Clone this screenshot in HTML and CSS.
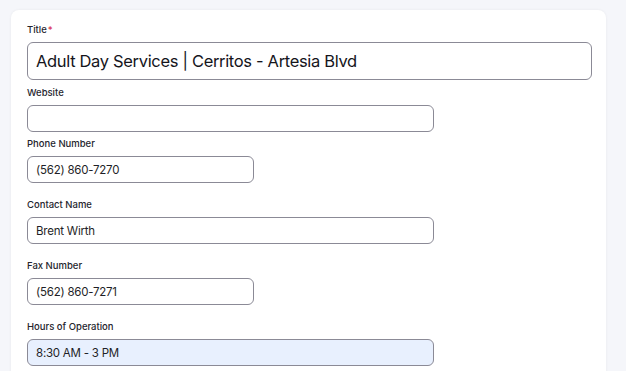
FILE: index.html
```html
<!DOCTYPE html>
<html lang="en">

<head>
    <meta charset="UTF-8">
    <title>Edit Listing</title>
    <link rel="stylesheet" href="styles.css">
</head>

<body>
    <main class="card">
        <div class="field field-title">
            <label for="title">Title<span class="req">*</span></label>
            <input id="title" class="input input-big" type="text" value="Adult Day Services | Cerritos - Artesia Blvd">
        </div>
        <div class="field field-tight">
            <label for="website">Website</label>
            <input id="website" class="input input-md" type="text" value="">
        </div>
        <div class="field">
            <label for="phone">Phone Number</label>
            <input id="phone" class="input input-sm" type="text" value="(562) 860-7270">
        </div>
        <div class="field">
            <label for="contact">Contact Name</label>
            <input id="contact" class="input input-md" type="text" value="Brent Wirth">
        </div>
        <div class="field">
            <label for="fax">Fax Number</label>
            <input id="fax" class="input input-sm" type="text" value="(562) 860-7271">
        </div>
        <div class="field">
            <label for="hours">Hours of Operation</label>
            <input id="hours" class="input input-md filled" type="text" value="8:30 AM - 3 PM">
        </div>
    </main>
</body>

</html>
```

FILE: styles.css
```css
body {
    margin: 0;
    padding: 10px 20px 0 11px;
    background-color: #f5f6fa;
    font-family: Inter, "Noto Sans", sans-serif;
    height: 361px;
    overflow: hidden;
}

.card {
    width: 564px;
    padding: 14px 15px 40px 16px;
    background-color: #fff;
    border-radius: 8px;
    box-shadow: 0 0 3px rgba(0, 0, 0, 0.06);
}

.field {
    margin-bottom: 16px;
}

.field-title {
    margin-bottom: 7px;
}

.field-tight {
    margin-bottom: 6px;
}

label {
    display: block;
    font-size: 9.5px;
    line-height: 12px;
    font-weight: 500;
    color: #25252d;
    margin-bottom: 6px;
}

.req {
    color: #d9304f;
    margin-left: 1px;
}

.input {
    display: block;
    box-sizing: border-box;
    height: 27px;
    padding: 0 8px;
    border: 1px solid #8b8a96;
    border-radius: 6px;
    background: #fff;
    font-family: Inter, "Noto Sans", sans-serif;
    font-size: 11.5px;
    letter-spacing: -0.02em;
    color: #1f1f27;
    outline: none;
}

.input-big {
    width: 565px;
    height: 38px;
    font-size: 16.5px;
    letter-spacing: -0.02em;
    color: #15151c;
}

.input-md {
    width: 407px;
}

.input-sm {
    width: 227px;
}

.filled {
    background-color: #e8f0fe;
}
```
